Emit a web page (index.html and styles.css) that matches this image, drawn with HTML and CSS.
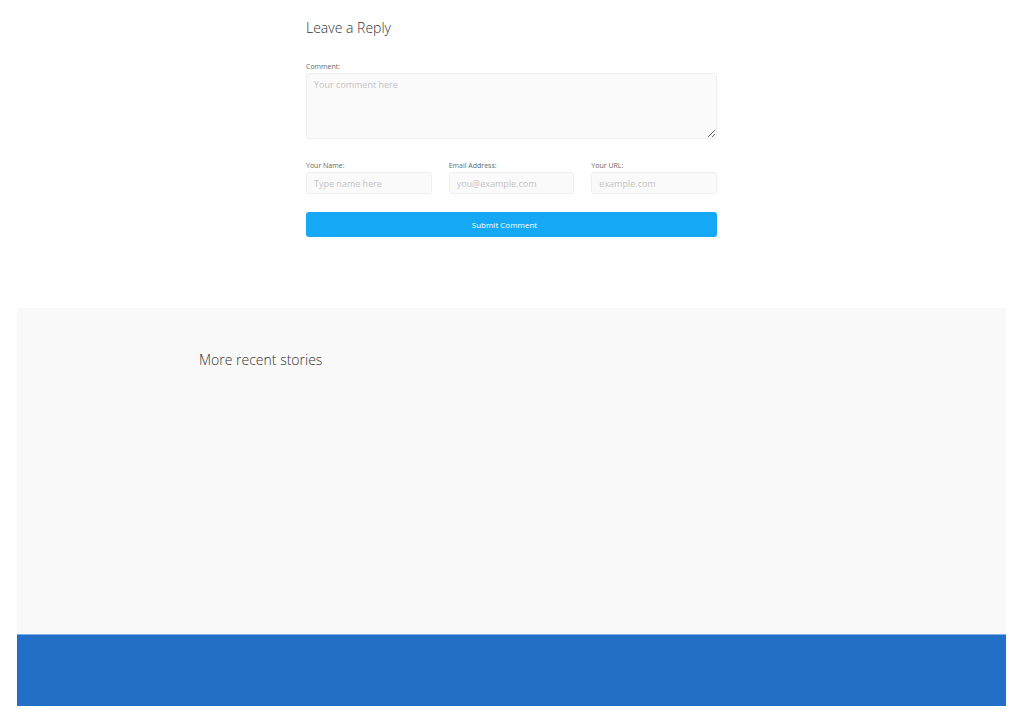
FILE: index.html
```html
<!DOCTYPE html>
<html lang="en">
<head>
	<title>Leave a Reply</title>
	<meta charset="utf-8" />
	<link rel="stylesheet" href="styles.css">
</head>
<body>
<section class="reply">
	<h3 class="reply-title">Leave a Reply</h3>
	<form class="comment-form">
		<label class="field-label" for="comment">Comment:</label>
		<textarea id="comment" class="comment-box" placeholder="Your comment here"></textarea>

		<div class="fields">
			<div class="field">
				<label class="field-label" for="name">Your Name:</label>
				<input id="name" type="text" placeholder="Type name here">
			</div>
			<div class="field">
				<label class="field-label" for="email">Email Address:</label>
				<input id="email" type="text" placeholder="you@example.com">
			</div>
			<div class="field">
				<label class="field-label" for="url">Your URL:</label>
				<input id="url" type="text" placeholder="example.com">
			</div>
		</div>

		<button type="button" class="submit">Submit Comment</button>
	</form>
</section>

<section class="recent">
	<h3 class="recent-title">More recent stories</h3>
</section>

<footer class="footer"></footer>
</body>
</html>
```

FILE: styles.css
```css
body {
	margin: 0;
	padding: 0;
	font-family: "Open Sans", "Liberation Sans", sans-serif;
	background: #fff;
	color: #333;
}

/* reply form */
.reply {
	width: 411px;
	margin: 0 0 0 306px;
	padding: 18px 0 71px;
}
.reply-title {
	margin: 0 0 24px;
	font-size: 14px;
	line-height: 20px;
	font-weight: 300;
	color: #333;
}
.field-label {
	display: block;
	font-size: 7px;
	line-height: 10px;
	color: #666;
	margin-bottom: 1px;
}
.comment-box,
.fields input {
	display: block;
	box-sizing: border-box;
	width: 100%;
	background: #fafafa;
	border: 1px solid #eee;
	border-radius: 3px;
	font-family: "Open Sans", "Liberation Sans", sans-serif;
	font-size: 9px;
	color: #333;
	padding: 0 7px;
	outline: none;
}
.comment-box {
	height: 66px;
	padding-top: 4px;
	resize: vertical;
}
.fields {
	display: flex;
	gap: 17px;
	margin-top: 22px;
}
.field {
	flex: 1;
}
.fields input {
	height: 22px;
}
::placeholder {
	color: #c4c4c4;
}
.submit {
	display: block;
	width: 100%;
	height: 25px;
	margin-top: 18px;
	padding: 0 14px 0 0;
	border: 0;
	border-radius: 3px;
	background: #15a9f5;
	color: #fff;
	font-family: "Open Sans", "Liberation Sans", sans-serif;
	font-size: 8px;
}

/* recent stories */
.recent {
	margin: 0 18px 0 17px;
	height: 326px;
	box-sizing: border-box;
	padding: 42px 0 0 182px;
	background: #f9f9f9;
}
.recent-title {
	margin: 0;
	font-size: 14px;
	line-height: 20px;
	font-weight: 300;
	color: #333;
}

.footer {
	margin: 0 18px 0 17px;
	height: 72px;
	background: #216fc6;
	border-top: 1px solid #7fb0e6;
	box-sizing: border-box;
}
```
